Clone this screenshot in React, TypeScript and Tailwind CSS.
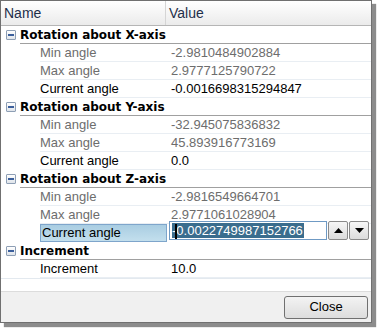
import React from 'react';

type Row =
  | { kind: 'cat'; label: string }
  | { kind: 'prop'; label: string; value: string; dim?: boolean; editing?: boolean };

const rows: Row[] = [
  { kind: 'cat', label: 'Rotation about X-axis' },
  { kind: 'prop', label: 'Min angle', value: '-2.9810484902884', dim: true },
  { kind: 'prop', label: 'Max angle', value: '2.9777125790722', dim: true },
  { kind: 'prop', label: 'Current angle', value: '-0.0016698315294847' },
  { kind: 'cat', label: 'Rotation about Y-axis' },
  { kind: 'prop', label: 'Min angle', value: '-32.945075836832', dim: true },
  { kind: 'prop', label: 'Max angle', value: '45.893916773169', dim: true },
  { kind: 'prop', label: 'Current angle', value: '0.0' },
  { kind: 'cat', label: 'Rotation about Z-axis' },
  { kind: 'prop', label: 'Min angle', value: '-2.9816549664701', dim: true },
  { kind: 'prop', label: 'Max angle', value: '2.9771061028904', dim: true },
  { kind: 'prop', label: 'Current angle', value: '-0.0022749987152766', editing: true },
  { kind: 'cat', label: 'Increment' },
  { kind: 'prop', label: 'Increment', value: '10.0' },
];

const MinusBox = () => (
  <div className="w-[10px] h-[10px] border border-[#8e9fb5] bg-gradient-to-b from-white to-[#dfe4ea] flex items-center justify-center rounded-[1px]">
    <div className="w-[6px] h-[2px] bg-[#3b5f9c]" />
  </div>
);

const SpinButton = ({ up }: { up?: boolean }) => (
  <div className="w-[20px] h-[19px] border border-[#8a8a8a] bg-gradient-to-b from-[#f6f6f6] to-[#dcdcdc] flex items-center justify-center rounded-[2px]">
    <svg width="9" height="5" viewBox="0 0 9 5">
      {up ? <polygon points="4.5,0 9,5 0,5" fill="#000" /> : <polygon points="0,0 9,0 4.5,5" fill="#000" />}
    </svg>
  </div>
);

export default function App() {
  return (
    <div className="w-[379px] h-[330px] bg-white" style={{ fontFamily: '"Liberation Sans", Arial, sans-serif' }}>
      <div className="w-[372px] h-[323px] border border-[#707070] bg-white flex flex-col shadow-[4px_4px_1px_rgba(0,0,0,0.45)]">
        {/* header */}
        <div className="h-[25px] flex bg-gradient-to-b from-white to-[#ebebeb] border-b border-[#b5b5b5] text-[14px] text-[#1e2f4a]">
          <div className="w-[165px] border-r border-[#d5d5d5] pl-[3px] flex items-center">Name</div>
          <div className="flex-1 pl-[3px] flex items-center">Value</div>
        </div>
        {/* rows */}
        <div className="flex flex-col">
          {rows.map((r, i) =>
            r.kind === 'cat' ? (
              <div key={i} className="h-[18px] flex">
                <div className="w-[19px] flex items-center justify-center">
                  <MinusBox />
                </div>
                <div
                  className="flex-1 flex items-center border-b border-[#a0a0a0] text-[12px] font-bold text-black"
                  style={{ fontFamily: '"DejaVu Sans", sans-serif' }}
                >
                  {r.label}
                </div>
              </div>
            ) : (
              <div key={i} className="h-[18px] flex text-[13px]">
                <div className="w-[39px]" />
                {r.editing ? (
                  <>
                    <div className="w-[127px] h-[18px] border border-[#7ea5cb] bg-gradient-to-b from-[#a9cde2] to-[#c3dfed] flex items-center pl-[1px] text-black">
                      {r.label}
                    </div>
                    <div className="flex-1 flex items-start pl-[2px] -mt-[3px] gap-[1px]">
                      <div className="w-[158px] h-[19px] border border-[#6f9ac4] bg-white flex items-center pl-[2px] relative">
                        <span className="bg-[#3a6d8e] text-white leading-[15px] pr-[1px]">{r.value}</span>
                        <div className="absolute left-[5px] top-[2px] w-[2px] h-[15px] bg-black" />
                      </div>
                      <SpinButton up />
                      <SpinButton />
                    </div>
                  </>
                ) : (
                  <>
                    <div
                      className={`w-[127px] flex items-center border-b border-[#e9eef3] ${r.dim ? 'text-[#6d6d6d]' : 'text-black'}`}
                    >
                      {r.label}
                    </div>
                    <div
                      className={`flex-1 flex items-center pl-[4px] border-b border-[#e9eef3] ${r.dim ? 'text-[#6d6d6d]' : 'text-black'}`}
                    >
                      {r.value}
                    </div>
                  </>
                )}
              </div>
            )
          )}
        </div>
        <div className="h-[13px] border-t border-[#e3e9ef]" />
        {/* button panel */}
        <div className="flex-1 bg-[#f0f0f0] border-t border-[#dcdcdc] flex items-center justify-end pr-[3px]">
          <button className="w-[84px] h-[23px] border border-[#707070] rounded-[3px] bg-gradient-to-b from-[#f3f3f3] to-[#dddddd] text-[13px] text-black">
            Close
          </button>
        </div>
      </div>
    </div>
  );
}
